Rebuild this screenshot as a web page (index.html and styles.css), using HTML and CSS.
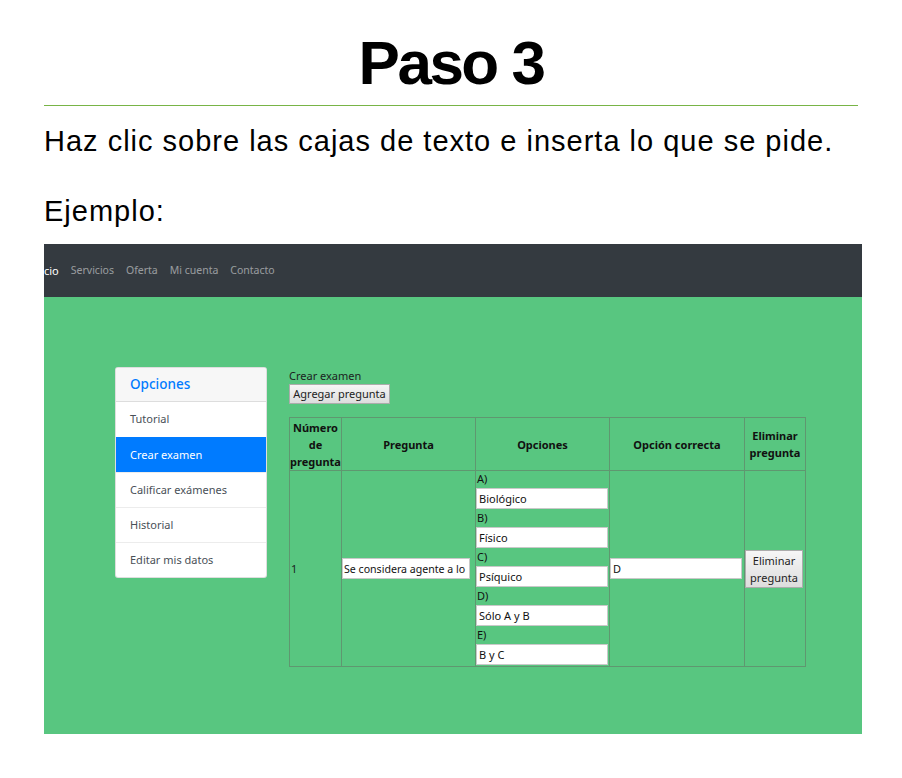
FILE: index.html
```html
<!DOCTYPE html>
<html lang="es">
<head>
<meta charset="utf-8">
<title>Paso 3</title>
<link rel="stylesheet" href="styles.css">
</head>
<body>
<div class="page">
  <h1 class="title">Paso 3</h1>
  <hr class="rule">
  <p class="lead">Haz clic sobre las cajas de texto e inserta lo que se pide.</p>
  <p class="lead example">Ejemplo:</p>

  <div class="shot">
    <nav class="navbar">
      <span class="nav-link active">cio</span>
      <span class="nav-link">Servicios</span>
      <span class="nav-link">Oferta</span>
      <span class="nav-link">Mi cuenta</span>
      <span class="nav-link">Contacto</span>
    </nav>
    <div class="shot-body">
      <aside class="card">
        <div class="card-header">Opciones</div>
        <div class="list-item">Tutorial</div>
        <div class="list-item current">Crear examen</div>
        <div class="list-item">Calificar exámenes</div>
        <div class="list-item">Historial</div>
        <div class="list-item">Editar mis datos</div>
      </aside>
      <section class="content">
        <div class="caption">Crear examen</div>
        <button class="btn add">Agregar pregunta</button>
        <table class="exam">
          <colgroup>
            <col class="c1"><col class="c2"><col class="c3"><col class="c4"><col class="c5">
          </colgroup>
          <thead>
            <tr>
              <th>Número de pregunta</th>
              <th>Pregunta</th>
              <th>Opciones</th>
              <th>Opción correcta</th>
              <th>Eliminar pregunta</th>
            </tr>
          </thead>
          <tbody>
            <tr>
              <td class="num">1</td>
              <td><input class="field q" type="text" value="Se considera agente a lo"></td>
              <td class="opts">
                <div class="opt"><div class="opt-label">A)</div><input class="field" type="text" value="Biológico"></div>
                <div class="opt"><div class="opt-label">B)</div><input class="field" type="text" value="Físico"></div>
                <div class="opt"><div class="opt-label">C)</div><input class="field" type="text" value="Psíquico"></div>
                <div class="opt"><div class="opt-label">D)</div><input class="field" type="text" value="Sólo A y B"></div>
                <div class="opt"><div class="opt-label">E)</div><input class="field" type="text" value="B y C"></div>
              </td>
              <td><input class="field ans" type="text" value="D"></td>
              <td class="del-cell"><button class="btn del">Eliminar<br>pregunta</button></td>
            </tr>
          </tbody>
        </table>
      </section>
    </div>
  </div>
</div>
</body>
</html>
```

FILE: styles.css
```css
html, body {
  margin: 0;
  padding: 0;
  background: #ffffff;
}

.page {
  width: 818px;
  padding: 0 0 0 44px;
  font-family: "Liberation Sans", Arial, sans-serif;
  color: #000;
}

.title {
  margin: 0;
  padding-top: 28px;
  width: 814px;
  text-align: center;
  font-family: "Liberation Sans", Arial, sans-serif;
  font-weight: 700;
  font-size: 62px;
  line-height: 70px;
  letter-spacing: -2.5px;
  height: 77px;
}

.rule {
  margin: 0;
  width: 814px;
  border: 0;
  height: 1px;
  background: #78b446;
}

.lead {
  margin: 0;
  font-size: 29px;
  line-height: 34px;
  letter-spacing: 1px;
  padding-top: 18px;
  height: 52px;
}

.lead.example {
  padding-top: 18px;
  height: 50px;
}

.shot {
  width: 818px;
  height: 490px;
  background: #58c680;
  overflow: hidden;
  font-family: "Noto Sans", "Open Sans", sans-serif;
}

.navbar {
  height: 53px;
  background: #343a40;
  display: flex;
  align-items: center;
  gap: 12px;
  font-size: 10.5px;
}

.nav-link {
  color: rgba(255, 255, 255, 0.5);
  margin-top: -1px;
}

.nav-link.active {
  color: #ffffff;
  font-size: 11px;
}

.shot-body {
  display: flex;
  align-items: flex-start;
  padding: 70px 0 0 71px;
  gap: 22px;
}

.card {
  width: 150px;
  background: #fff;
  border: 1px solid rgba(0, 0, 0, 0.13);
  border-radius: 3px;
  overflow: hidden;
  flex: none;
}

.card-header {
  height: 33px;
  line-height: 33px;
  background: #f7f7f7;
  border-bottom: 1px solid rgba(0, 0, 0, 0.1);
  color: #007bff;
  font-size: 13.5px;
  font-weight: 500;
  padding-left: 14px;
}

.list-item {
  height: 34px;
  line-height: 34px;
  padding-left: 14px;
  font-size: 11px;
  color: #495057;
  border-top: 1px solid #ececec;
}

.card-header + .list-item {
  border-top: 0;
  height: 35px;
}

.list-item.current {
  background: #007bff;
  color: #fff;
  border-top-color: #007bff;
}

.content {
  display: flex;
  flex-direction: column;
  align-items: flex-start;
  color: #1b1e21;
  font-size: 11px;
}

.caption {
  line-height: 15px;
  margin-top: 1px;
}

.btn {
  font-family: "Noto Sans", "Open Sans", sans-serif;
  font-size: 11px;
  color: #222;
  background: linear-gradient(#f6f6f6, #dddddd);
  border: 1px solid #acacac;
  border-radius: 0;
  padding: 0;
  cursor: default;
}

.btn.add {
  width: 101px;
  height: 20px;
  line-height: 18px;
  margin-top: 1px;
}

.exam {
  margin-top: 13px;
  width: 516px;
  table-layout: fixed;
  border-collapse: collapse;
  border: 1px solid #3f7650;
}

.c1 { width: 52px; }
.c2 { width: 134px; }
.c3 { width: 134px; }
.c4 { width: 135px; }
.c5 { width: 61px; }

.exam th,
.exam td {
  border: 1px solid #5f9770;
  padding: 0;
  vertical-align: middle;
}

.exam th {
  height: 52px;
  font-weight: 700;
  font-size: 11px;
  line-height: 17px;
  text-align: center;
  color: #111;
}

.exam td {
  height: 195px;
  font-size: 11px;
}

.num {
  padding-left: 1px !important;
}

.field {
  display: block;
  box-sizing: border-box;
  height: 21px;
  width: 132px;
  margin: 0;
  border: 1px solid #c9c9c9;
  background: #fff;
  font-family: "Noto Sans", "Open Sans", sans-serif;
  font-size: 11px;
  color: #111;
  padding: 0 2px;
  outline: none;
}

.field.q {
  width: 128px;
  padding: 0 0 0 1px;
  font-size: 10.6px;
}

.field.ans {
  width: 132px;
}

.opts {
  vertical-align: top !important;
}

.opt {
  height: 39px;
}

.opt-label {
  height: 17px;
  line-height: 16px;
  padding-left: 1px;
  color: #111;
}

.btn.del {
  display: block;
  width: 58px;
  height: 38px;
  line-height: 17px;
  margin: 0;
}
```
